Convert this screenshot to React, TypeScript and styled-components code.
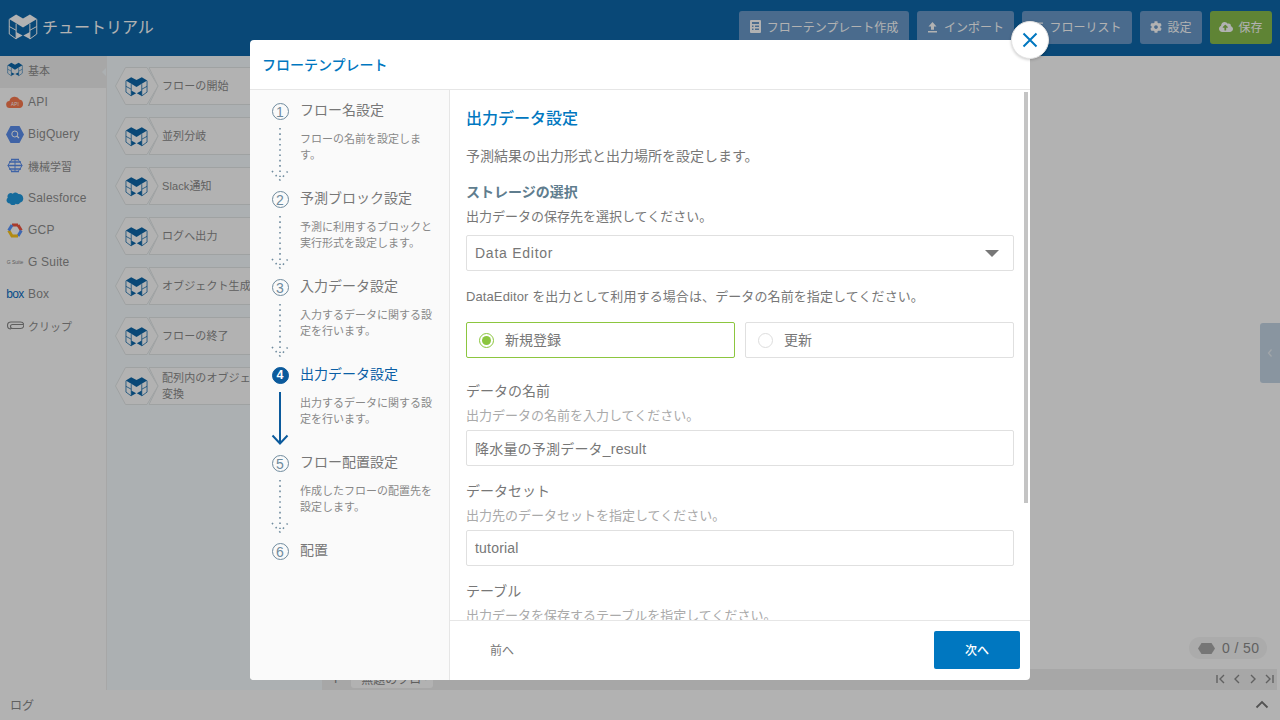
import React from "react";
import styled, { createGlobalStyle } from "styled-components";
import { FaCog, FaCloudUploadAlt, FaList } from "react-icons/fa";

const Global = createGlobalStyle`
  html, body { margin: 0; padding: 0; width: 1280px; height: 720px; overflow: hidden; }
  * { box-sizing: border-box; }
  body { font-family: "Liberation Sans", "Noto Sans CJK JP", sans-serif; color: #777; }
`;

const Page = styled.div`
  position: relative; width: 1280px; height: 720px; overflow: hidden;
  display: flex; flex-direction: column; background: #fff;
`;
const Header = styled.header`
  height: 56px; flex: none; background: #0e68ab; display: flex; align-items: center;
  padding: 0 8px; gap: 8px;
`;
const Brand = styled.div`
  display: flex; align-items: center; gap: 4px; margin-right: auto; color: #fff;
  font-size: 16px; letter-spacing: 0; padding-bottom: 2px;
`;
const BrandText = styled.span`position: relative; top: -1px;`;
const HeadButton = styled.div<{ $green?: boolean; $w: number; $tight?: boolean }>`
  height: 33px; margin-top: -1px; padding-bottom: 2px; border-radius: 3px; display: flex; align-items: center; justify-content: center;
  gap: ${p => (p.$tight ? 5 : 6)}px; font-size: 12px; color: #fff; width: ${p => p.$w}px;
  background: ${p => (p.$green ? "#88bd4d" : "#6a9acb")};
  svg { flex: none; }
`;
const Body = styled.div`flex: 1; display: flex; min-height: 0;`;
const Side = styled.nav`width: 107px; flex: none; background: #fff; border-right: 1px solid #f0f0f0;`;
const SideItem = styled.div<{ $active?: boolean; $jp?: boolean }>`
  height: 32px; display: flex; align-items: center; gap: 4px; padding: 0 0 ${p => (p.$jp ? 5 : 4)}px 6px;
  font-size: ${p => (p.$jp ? 11 : 12)}px; color: #8f8f8f; background: ${p => (p.$active ? "#f0f0f0" : "transparent")};
  position: relative; letter-spacing: ${p => (p.$jp ? 0 : 0.2)}px;
  ${p => p.$active && `&::after { content: ""; position: absolute; right: 0; top: 12px; border: 4px solid transparent; border-right-color: #f6fdff; border-left-width: 0; }`}
`;
const SideIcon = styled.span`width: 18px; height: 18px; flex: none; display: flex; align-items: center; justify-content: center;`;
const TinyBrand = styled.span`font-size: 5px; color: #888; white-space: nowrap; letter-spacing: 0;`;
const BoxBrand = styled.span`font-size: 12px; color: #0a6fc4; white-space: nowrap; letter-spacing: -.6px;`;
const Blocks = styled.div`
  width: 215px; flex: none; background: #f6fdff; padding: 11px 0 0 8px;
  display: flex; flex-direction: column; gap: 12px;
`;
const Block = styled.div`position: relative; height: 38px; width: 240px; flex: none;`;
const BlockShape = styled.svg`position: absolute; inset: 0;`;
const BlockIconBox = styled.span`position: absolute; left: 10px; top: 9px; display: flex;`;
const BlockLabel = styled.span`
  position: absolute; left: 47px; top: 0; bottom: 0; width: 118px; display: flex; align-items: center;
  font-size: 11px; line-height: 16px; color: #8c8c8c; letter-spacing: .1px;
`;
const Canvas = styled.div`flex: 1; display: flex; flex-direction: column; justify-content: flex-end; position: relative;`;
const TabBar = styled.div`
  height: 21px; background: #f0f0f0; margin-right: 3px; display: flex; align-items: flex-start; padding-left: 9px; position: relative;
`;
const Plus = styled.span`font-size: 16px; line-height: 20px; color: #888;`;
const Tab = styled.div`
  margin-left: 11px; width: 82px; height: 19px; background: #fff; border-radius: 0 0 3px 3px; overflow: hidden;
  font-size: 12px; color: #888; padding: 0 6px 0 10px; line-height: 22px; display: flex; justify-content: space-between;
`;
const TabClose = styled.span`font-size: 10px;`;
const Pager = styled.div`
  position: absolute; right: 2px; top: 4px; display: flex; gap: 4px; color: #777;
`;
const Counter = styled.div`
  position: absolute; right: 13px; bottom: 31px; width: 78px; height: 22px; border-radius: 11px; background: #f5f5f5;
  display: flex; align-items: center; gap: 7px; padding-left: 9px; font-size: 14px; color: #8c8c8c; letter-spacing: .4px;
`;
const Handle = styled.div`
  position: absolute; right: 0; top: 267px; width: 20px; height: 60px; background: #c5d6e6; border-radius: 3px 0 0 3px;
  display: flex; align-items: center; justify-content: center;
`;
const LogBar = styled.footer`
  height: 30px; flex: none; background: #fff; display: flex; align-items: center; justify-content: space-between;
  padding: 0 11px 2px 10px; font-size: 12px; color: #8c8c8c;
`;
const Overlay = styled.div`position: absolute; inset: 0; background: rgba(0,0,0,.3); display: flex; align-items: flex-start; justify-content: center; padding-top: 40px;`;
const Modal = styled.section`
  position: relative; width: 780px; height: 640px; background: #fff; border-radius: 4px;
  display: flex; flex-direction: column;
`;
const ModalHead = styled.div`
  height: 50px; flex: none; border-bottom: 1px solid #e6e6e6; display: flex; align-items: center; padding: 0 12px 2px;
  font-size: 14px; font-weight: 500; color: #0077c0;
`;
const Close = styled.button`
  position: absolute; right: -19px; top: -19px; width: 38px; height: 38px; border-radius: 50%;
  border: 1px solid #e4e4e4; background: #fff; padding: 0; display: flex; align-items: center; justify-content: center;
  box-shadow: 0 1px 3px rgba(0,0,0,.2);
`;
const ModalBody = styled.div`flex: 1; display: flex; min-height: 0;`;
const Stepper = styled.aside`
  width: 200px; flex: none; background: #fafafa; border-right: 1px solid #e6e6e6; border-radius: 0 0 0 4px; padding-top: 10px;
`;
const Step = styled.div`display: grid; grid-template-columns: 50px 1fr; height: 88px; position: relative;`;
const StepRail = styled.div`
  display: flex; flex-direction: column; align-items: center; padding-left: 10px;
  svg { margin-top: 7px; flex: none; }
`;
const Num = styled.span<{ $active?: boolean }>`
  width: 17px; height: 17px; margin-top: 3px; border-radius: 50%; flex: none; display: flex; align-items: center; justify-content: center;
  font-size: ${p => (p.$active ? 12.5 : 14)}px; line-height: 1;
  border: 1.2px solid ${p => (p.$active ? "#0b5a9c" : "#6f8b9e")};
  background: ${p => (p.$active ? "#0b5a9c" : "transparent")};
  color: ${p => (p.$active ? "#fff" : "#6f8b9e")};
  font-weight: ${p => (p.$active ? 700 : 400)};
`;
const StepText = styled.div``;
const StepTitle = styled.div<{ $active?: boolean }>`
  font-size: 14px; line-height: 18px; padding-top: 1px; color: ${p => (p.$active ? "#0b5fa5" : "#777")}; letter-spacing: 0;
`;
const StepDesc = styled.div`font-size: 11px; line-height: 16px; color: #888; margin-top: 12px; width: 138px;`;
const Main = styled.div`flex: 1; display: flex; flex-direction: column; min-width: 0; position: relative;`;
const Scroll = styled.div`flex: 1; overflow: hidden; padding: 0 16px; min-height: 0;`;
const Thumb = styled.div`position: absolute; right: 2px; top: 2px; width: 4px; height: 411px; background: #c4c4c4;`;
const Title = styled.h2`margin: 19px 0 0; font-size: 16px; line-height: 20px; font-weight: 500; color: #0077c0;`;
const Para = styled.p`margin: 17px 0 0; font-size: 14px; line-height: 20px; color: #777; letter-spacing: 0;`;
const Sub = styled.h3`margin: 16px 0 0; font-size: 14px; line-height: 20px; font-weight: 700; color: #5f7d8e;`;
const Hint = styled.p`margin: 5px 0 0; font-size: 13px; line-height: 20px; color: #777;`;
const Select = styled.div`
  margin-top: 8px; height: 36px; border: 1px solid #e0e0e0; border-radius: 2px; display: flex; align-items: center;
  justify-content: space-between; padding: 0 14px 0 8px; font-size: 14px; color: #777; letter-spacing: .75px;
`;
const Caret = styled.span`width: 0; height: 0; border-left: 7px solid transparent; border-right: 7px solid transparent; border-top: 7px solid #777;`;
const Note = styled.p`margin: 16px 0 0; font-size: 13px; line-height: 20px; color: #777; letter-spacing: .1px;`;
const Radios = styled.div`display: grid; grid-template-columns: 1fr 1fr; gap: 10px; margin-top: 15px;`;
const Radio = styled.div<{ $on?: boolean }>`
  height: 36px; border-radius: 2px; border: 1px solid ${p => (p.$on ? "#8cc63f" : "#e0e0e0")};
  display: flex; align-items: center; gap: 11px; padding: 0 0 2px 12px; font-size: 14px; color: #777;
`;
const Dot = styled.span<{ $on?: boolean }>`
  width: 15px; height: 15px; border-radius: 50%; border: 1.5px solid ${p => (p.$on ? "#8cc63f" : "#ddd")};
  display: flex; align-items: center; justify-content: center; position: relative; top: 1px;
  &::after { content: ""; width: 9px; height: 9px; border-radius: 50%; background: ${p => (p.$on ? "#8cc63f" : "transparent")}; }
`;
const FieldLabel = styled.div<{ $first?: boolean }>`margin-top: ${p => (p.$first ? 23 : 15)}px; font-size: 14px; line-height: 20px; color: #777;`;
const FieldHint = styled.div`margin-top: 5px; font-size: 13px; line-height: 20px; color: #aaa;`;
const Input = styled.div`
  margin-top: 4px; height: 36px; border: 1px solid #e0e0e0; border-radius: 2px; display: flex; align-items: center; padding: 0 8px;
  font-size: 14px; color: #777; letter-spacing: .2px;
`;
const Foot = styled.div`
  height: 60px; flex: none; border-top: 1px solid #e6e6e6; display: flex; align-items: center; justify-content: space-between;
  padding: 0 10px 2px 40px; font-size: 12px; color: #777;
`;
const Next = styled.button`
  width: 86px; height: 38px; border: 0; border-radius: 2px; background: #0077c0; color: #fff; font: inherit; font-size: 12px; font-weight: 500;
`;

const Cube = ({ color = "#0e68ab", size = 24 }: { color?: string; size?: number }) => (
  <svg width={size} height={(size * 22) / 24} viewBox="0 0 24 22">
    <g fill={color}>
      <path d="M.8 4.800 6.500 1.200 12 4.300 17.500 1.200 23.200 4.800 17.500 8.200 12 11.600 6.500 8.200Z" />
      <path d="M6.500 15.200 11.700 18 6.500 20.800ZM17.500 15.200 12.300 18 17.500 20.800Z" />
    </g>
    <path d="M1 5V16.800L6.500 20.800M23 5V16.800L17.500 20.800M6.500 8.500V20.800M17.500 8.500V20.800M1 10.800 6.500 13.800M23 10.800 17.500 13.800" fill="none" stroke={color} strokeWidth=".8" />
  </svg>
);

const TemplateIcon = () => (
  <svg width="11" height="13" viewBox="0 0 11 13"><path fill="#fff" fillRule="evenodd" d="M1 0h9a1 1 0 0 1 1 1v11a1 1 0 0 1-1 1H1a1 1 0 0 1-1-1V1a1 1 0 0 1 1-1Zm1 2v2h7V2Zm0 3.500v1.500h1.500V5.500Zm3 0v1.500h4V5.500ZM2 8.500V10h1.500V8.500Zm3 0V10h4V8.500Z" /></svg>
);
const UploadIcon = () => (
  <svg width="11" height="12" viewBox="0 0 11 12"><path fill="#fff" d="M5.500 1 9.500 5.500H7v3.200H4V5.500H1.500ZM1 10h9v1.500H1Z" /></svg>
);
const CloudApi = () => (
  <svg width="19" height="14" viewBox="0 0 18 14">
    <path fill="#fb7a50" d="M4 13a3.500 3.500 0 0 1-.6-7A5.500 5.500 0 0 1 13.500 4.500 4.400 4.400 0 0 1 14 13Z" />
    <text x="9" y="10.500" fontSize="4.500" textAnchor="middle" fill="#fff" fontFamily="Liberation Sans">API</text>
  </svg>
);
const BigQueryIcon = () => (
  <svg width="18" height="17" viewBox="0 0 18 17">
    <path fill="#5b8fee" d="M4.500 0h9L18 8.500 13.500 17h-9L0 8.500Z" />
    <circle cx="8.800" cy="8" r="3" fill="none" stroke="#fff" strokeWidth="1" />
    <path d="M11 10.200 13 12" stroke="#fff" strokeWidth="1.200" />
  </svg>
);
const BrainIcon = () => (
  <svg width="16" height="15" viewBox="0 0 16 15" fill="none" stroke="#5b8fee" strokeWidth="1.500">
    <path d="M4 1.500h8M2 4h12M.8 7.500h14.400M2 11h12M4 13.500h8" />
    <path d="M8 1v13M5 1.500 3 4 1 7.500 3 11l2 2.500M11 1.500 13 4l2 3.500L13 11l-2 2.500" strokeWidth="1" />
  </svg>
);
const SalesforceCloud = () => (
  <svg width="18" height="14" viewBox="0 0 18 14">
    <path fill="#1f9ae0" d="M4 12.500A3.200 3.200 0 0 1 1.800 6.800 3.300 3.300 0 0 1 6.800 2.800 3.700 3.700 0 0 1 12.400 3 4.500 4.500 0 0 1 14 11.800 3 3 0 0 1 9.800 12.700 3.400 3.400 0 0 1 4 12.500Z" />
  </svg>
);
const GcpIcon = () => (
  <svg width="16" height="15" viewBox="0 0 16 15" fill="none" strokeWidth="3">
    <path d="M5 2h6" stroke="#f2543f" />
    <path d="M11 2 14.300 7.500" stroke="#f2543f" />
    <path d="M14.300 7.500 11 13" stroke="#5a96ff" />
    <path d="M11 13H5L1.700 7.500" stroke="#ffc81a" />
    <path d="M1.700 7.500 5 2" stroke="#5a96ff" />
  </svg>
);
const ClipIcon = () => (
  <svg width="17" height="9" viewBox="0 0 17 9" fill="none" stroke="#888" strokeWidth="1.100">
    <path d="M16 3.500H5.500a2 2 0 0 0 0 4h8a3 3 0 0 0 0-6.500H4a3.300 3.300 0 0 0 0 7" />
  </svg>
);
const PagerIcon = ({ d }: { d: string }) => (
  <svg width="12" height="12" viewBox="0 0 12 12" fill="none" stroke="#8c8c8c" strokeWidth="1.400"><path d={d} /></svg>
);
const DotArrow = () => (
  <svg width="20" height="54" viewBox="0 0 20 54" fill="none" stroke="#6f8b9e" strokeWidth="1.600" strokeDasharray="1.600 3.700">
    <path d="M10 1V50" />
    <path d="M2 44 10 53 18 44" strokeDasharray="1.500 4" />
  </svg>
);
const SolidArrow = () => (
  <svg width="20" height="54" viewBox="0 0 20 54" fill="none" stroke="#0b5a9c" strokeWidth="2">
    <path d="M10 1V52" />
    <path d="M2.500 44.500 10 52.500 17.500 44.500" />
  </svg>
);

const sideItems: [React.ReactNode, string, boolean][] = [
  [<Cube size={16} />, "基本", true],
  [<CloudApi />, "API", false],
  [<BigQueryIcon />, "BigQuery", false],
  [<BrainIcon />, "機械学習", true],
  [<SalesforceCloud />, "Salesforce", false],
  [<GcpIcon />, "GCP", false],
  [<TinyBrand>G Suite</TinyBrand>, "G Suite", false],
  [<BoxBrand>box</BoxBrand>, "Box", false],
  [<ClipIcon />, "クリップ", true],
];
const blocks = ["フローの開始", "並列分岐", "Slack通知", "ログへ出力", "オブジェクト生成", "フローの終了", "配列内のオブジェクト変換"];
const steps = [
  ["フロー名設定", "フローの名前を設定します。"],
  ["予測ブロック設定", "予測に利用するブロックと実行形式を設定します。"],
  ["入力データ設定", "入力するデータに関する設定を行います。"],
  ["出力データ設定", "出力するデータに関する設定を行います。"],
  ["フロー配置設定", "作成したフローの配置先を設定します。"],
  ["配置", ""],
];

export default function App() {
  return (
    <Page>
      <Global />
      <Header>
        <Brand><Cube color="#fff" size={30} /><BrandText>チュートリアル</BrandText></Brand>
        <HeadButton $w={170}><TemplateIcon />フローテンプレート作成</HeadButton>
        <HeadButton $w={97}><UploadIcon />インポート</HeadButton>
        <HeadButton $w={110}><FaList size={11} />フローリスト</HeadButton>
        <HeadButton $w={62} $tight><FaCog size={12} />設定</HeadButton>
        <HeadButton $w={62} $tight $green><FaCloudUploadAlt size={14} />保存</HeadButton>
      </Header>
      <Body>
        <Side>
          {sideItems.map(([icon, label, jp], i) => (
            <SideItem key={label} $active={i === 0} $jp={jp}><SideIcon>{icon}</SideIcon>{label}</SideItem>
          ))}
        </Side>
        <Blocks>
          {blocks.map(b => (
            <Block key={b}>
              <BlockShape width="240" height="38" viewBox="0 0 240 38" fill="#fff" stroke="#e4e8e9">
                <path d="M34 .5H240V37.500H34L43 19Z" />
                <path d="M10.500 .5H32L43 19 32 37.500H10.500L.5 19Z" />
              </BlockShape>
              <BlockIconBox><Cube size={23} /></BlockIconBox>
              <BlockLabel>{b}</BlockLabel>
            </Block>
          ))}
        </Blocks>
        <Canvas>
          <Handle>
            <svg width="8" height="10" viewBox="0 0 8 10" fill="none" stroke="#e8eef3" strokeWidth="1.200"><path d="M5.500 1.500 2.500 5l3 3.500" /></svg>
          </Handle>
          <Counter>
            <svg width="17" height="11" viewBox="0 0 17 11"><path fill="#aaa" d="M3.500 0h10L17 5.500 13.500 11h-10L0 5.500Z" /></svg>
            0 / 50
          </Counter>
          <TabBar>
            <Plus>+</Plus>
            <Tab>無題のフロー<TabClose>·</TabClose></Tab>
            <Pager>
              <PagerIcon d="M2 2V10M9 2 5 6l4 4" />
              <PagerIcon d="M8 2 4 6l4 4" />
              <PagerIcon d="M4 2l4 4-4 4" />
              <PagerIcon d="M3 2l4 4-4 4M10 2V10" />
            </Pager>
          </TabBar>
        </Canvas>
      </Body>
      <LogBar>
        ログ
        <svg width="14" height="9" viewBox="0 0 14 9" fill="none" stroke="#777" strokeWidth="1.800"><path d="M1.500 7.500 7 2l5.500 5.500" /></svg>
      </LogBar>
      <Overlay>
        <Modal>
          <ModalHead>フローテンプレート</ModalHead>
          <Close aria-label="close">
            <svg width="18" height="18" viewBox="0 0 18 18" fill="none" stroke="#0077c0" strokeWidth="2"><path d="M2.500 2.500 15.500 15.500M15.500 2.500 2.500 15.500" /></svg>
          </Close>
          <ModalBody>
            <Stepper>
              {steps.map(([t, d], i) => (
                <Step key={t}>
                  <StepRail>
                    <Num $active={i === 3}>{i + 1}</Num>
                    {i < 5 && (i === 3 ? <SolidArrow /> : <DotArrow />)}
                  </StepRail>
                  <StepText>
                    <StepTitle $active={i === 3}>{t}</StepTitle>
                    {d && <StepDesc>{d}</StepDesc>}
                  </StepText>
                </Step>
              ))}
            </Stepper>
            <Main>
              <Scroll>
                <Title>出力データ設定</Title>
                <Para>予測結果の出力形式と出力場所を設定します。</Para>
                <Sub>ストレージの選択</Sub>
                <Hint>出力データの保存先を選択してください。</Hint>
                <Select>Data Editor<Caret /></Select>
                <Note>DataEditor を出力として利用する場合は、データの名前を指定してください。</Note>
                <Radios>
                  <Radio $on><Dot $on />新規登録</Radio>
                  <Radio><Dot />更新</Radio>
                </Radios>
                <FieldLabel $first>データの名前</FieldLabel>
                <FieldHint>出力データの名前を入力してください。</FieldHint>
                <Input>降水量の予測データ_result</Input>
                <FieldLabel>データセット</FieldLabel>
                <FieldHint>出力先のデータセットを指定してください。</FieldHint>
                <Input>tutorial</Input>
                <FieldLabel>テーブル</FieldLabel>
                <FieldHint>出力データを保存するテーブルを指定してください。</FieldHint>
              </Scroll>
              <Thumb />
              <Foot>前へ<Next>次へ</Next></Foot>
            </Main>
          </ModalBody>
        </Modal>
      </Overlay>
    </Page>
  );
}
